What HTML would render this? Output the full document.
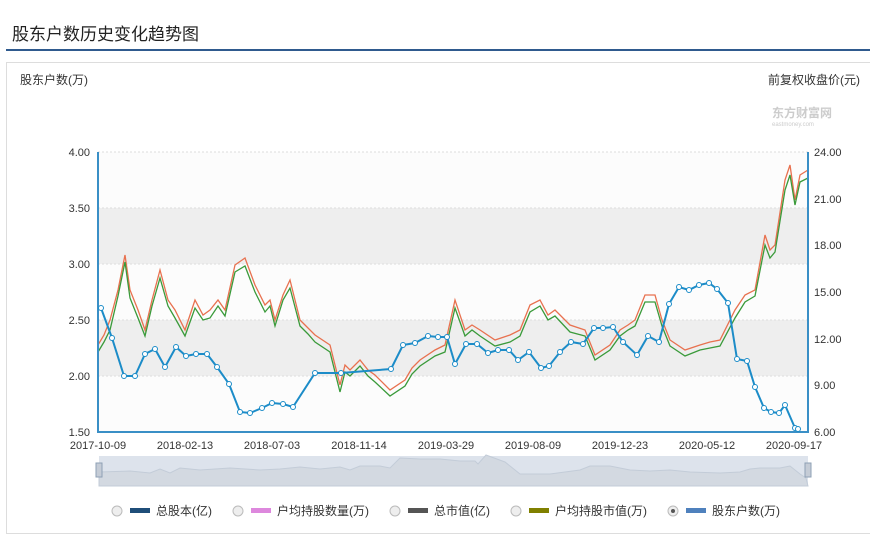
<!DOCTYPE html><html><head><meta charset="utf-8"><style>
body{margin:0;width:870px;height:521px;background:#fff;font-family:"Liberation Sans","Noto Sans CJK SC",sans-serif;overflow:hidden;position:relative}
.t{position:absolute;left:12px;top:20px;font-size:17px;color:#222}
.bar{position:absolute;left:6px;top:49px;width:864px;height:2px;background:#2f5a8e}
.box{position:absolute;left:6px;top:62px;width:864px;height:470px;border:1px solid #ddd;border-right:none}
svg{position:absolute;left:0;top:0}
</style></head><body>
<div class="t">股东户数历史变化趋势图</div><div class="bar"></div><div class="box"></div>
<svg width="870" height="521" font-family="Liberation Sans, Noto Sans CJK SC, sans-serif" font-size="11" fill="#333">
<text x="20" y="84" font-size="12">股东户数(万)</text>
<text x="768" y="84" font-size="12">前复权收盘价(元)</text>
<text x="772" y="117" font-size="12" fill="#ccc" font-weight="bold">东方财富网</text>
<text x="772" y="126" font-size="6" fill="#ccc">eastmoney.com</text>
<rect x="98" y="152" width="710" height="280" fill="#fcfcfc"/>
<rect x="98" y="208" width="710" height="56" fill="#eee"/>
<rect x="98" y="320" width="710" height="56" fill="#eee"/>
<g stroke="#ddd" stroke-dasharray="2,2"><line x1="98" y1="152" x2="808" y2="152"/><line x1="98" y1="208" x2="808" y2="208"/><line x1="98" y1="264" x2="808" y2="264"/><line x1="98" y1="320" x2="808" y2="320"/><line x1="98" y1="376" x2="808" y2="376"/></g>
<g text-anchor="end"><text x="90" y="156">4.00</text><text x="90" y="212">3.50</text><text x="90" y="268">3.00</text><text x="90" y="324">2.50</text><text x="90" y="380">2.00</text><text x="90" y="436">1.50</text></g>
<g><text x="814" y="156">24.00</text><text x="814" y="203">21.00</text><text x="814" y="249">18.00</text><text x="814" y="296">15.00</text><text x="814" y="343">12.00</text><text x="814" y="389">9.00</text><text x="814" y="436">6.00</text></g>
<g text-anchor="middle"><text x="98" y="449">2017-10-09</text><text x="185" y="449">2018-02-13</text><text x="272" y="449">2018-07-03</text><text x="359" y="449">2018-11-14</text><text x="446" y="449">2019-03-29</text><text x="533" y="449">2019-08-09</text><text x="620" y="449">2019-12-23</text><text x="707" y="449">2020-05-12</text><text x="794" y="449">2020-09-17</text></g>
<polyline fill="none" stroke="#e8714f" stroke-width="1.3" points="98,345 104,335 110,320 118,290 125,255 130,290 138,310 145,330 152,300 160,270 168,300 175,310 185,330 195,300 203,315 210,310 218,300 225,310 235,265 245,258 255,285 265,305 270,300 275,320 283,295 290,280 300,320 308,328 315,335 330,345 340,385 345,365 350,370 360,360 368,370 375,375 390,390 405,380 412,368 420,360 435,350 445,345 455,300 465,330 472,325 480,330 495,340 510,335 520,330 530,305 540,300 548,315 555,310 570,325 585,330 595,355 610,345 620,330 628,325 635,320 645,295 655,295 662,320 670,340 685,350 700,345 710,342 720,340 735,310 745,295 755,290 765,235 770,250 775,245 785,180 790,165 795,200 800,175 808,170"/>
<polyline fill="none" stroke="#3a9a3a" stroke-width="1.3" points="98,352 104,342 110,330 118,296 125,262 130,298 138,318 145,336 152,306 160,278 168,306 175,318 185,336 195,308 203,320 210,318 218,306 225,316 235,272 245,266 255,292 265,312 270,306 275,326 283,300 290,288 300,326 308,334 315,342 330,352 340,392 345,372 350,376 360,366 368,376 375,382 390,396 405,386 412,374 420,366 435,356 445,352 455,308 465,336 472,330 480,336 495,346 510,342 520,336 530,312 540,306 548,320 555,316 570,332 585,336 595,360 610,350 620,336 628,330 635,326 645,302 655,302 662,326 670,346 685,356 700,350 710,348 720,346 735,318 745,302 755,296 765,245 770,258 775,252 785,190 790,175 795,205 800,182 808,178"/>
<line x1="98" y1="152" x2="98" y2="432" stroke="#3a8fc6" stroke-width="2"/>
<line x1="808" y1="152" x2="808" y2="432" stroke="#3a8fc6" stroke-width="2"/>
<line x1="97" y1="432" x2="809" y2="432" stroke="#3a8fc6" stroke-width="2"/>
<polyline fill="none" stroke="#1c8cc8" stroke-width="2" points="101,308 112,338 124,376 135,376 145,354 155,349 165,367 176,347 186,356 196,354 207,354 217,367 229,384 240,412 250,413 262,408 272,403 283,404 293,407 315,373 341,373 391,369 403,345 415,343 428,336 438,337 447,337 455,364 466,344 477,344 488,353 498,350 509,350 518,360 529,352 541,368 549,366 560,352 571,342 583,344 594,328 603,328 613,327 623,342 637,355 648,336 659,342 669,304 679,287 689,290 699,285 709,283 717,289 728,303 737,359 747,361 755,387 764,408 771,412 779,413 785,405 795,428 798,429"/>
<g fill="#fff" stroke="#1c8cc8" stroke-width="1">
<circle cx="101" cy="308" r="2.5"/><circle cx="112" cy="338" r="2.5"/><circle cx="124" cy="376" r="2.5"/><circle cx="135" cy="376" r="2.5"/><circle cx="145" cy="354" r="2.5"/><circle cx="155" cy="349" r="2.5"/><circle cx="165" cy="367" r="2.5"/><circle cx="176" cy="347" r="2.5"/><circle cx="186" cy="356" r="2.5"/><circle cx="196" cy="354" r="2.5"/><circle cx="207" cy="354" r="2.5"/><circle cx="217" cy="367" r="2.5"/><circle cx="229" cy="384" r="2.5"/><circle cx="240" cy="412" r="2.5"/><circle cx="250" cy="413" r="2.5"/><circle cx="262" cy="408" r="2.5"/><circle cx="272" cy="403" r="2.5"/><circle cx="283" cy="404" r="2.5"/><circle cx="293" cy="407" r="2.5"/><circle cx="315" cy="373" r="2.5"/><circle cx="341" cy="373" r="2.5"/><circle cx="391" cy="369" r="2.5"/><circle cx="403" cy="345" r="2.5"/><circle cx="415" cy="343" r="2.5"/><circle cx="428" cy="336" r="2.5"/><circle cx="438" cy="337" r="2.5"/><circle cx="447" cy="337" r="2.5"/><circle cx="455" cy="364" r="2.5"/><circle cx="466" cy="344" r="2.5"/><circle cx="477" cy="344" r="2.5"/><circle cx="488" cy="353" r="2.5"/><circle cx="498" cy="350" r="2.5"/><circle cx="509" cy="350" r="2.5"/><circle cx="518" cy="360" r="2.5"/><circle cx="529" cy="352" r="2.5"/><circle cx="541" cy="368" r="2.5"/><circle cx="549" cy="366" r="2.5"/><circle cx="560" cy="352" r="2.5"/><circle cx="571" cy="342" r="2.5"/><circle cx="583" cy="344" r="2.5"/><circle cx="594" cy="328" r="2.5"/><circle cx="603" cy="328" r="2.5"/><circle cx="613" cy="327" r="2.5"/><circle cx="623" cy="342" r="2.5"/><circle cx="637" cy="355" r="2.5"/><circle cx="648" cy="336" r="2.5"/><circle cx="659" cy="342" r="2.5"/><circle cx="669" cy="304" r="2.5"/><circle cx="679" cy="287" r="2.5"/><circle cx="689" cy="290" r="2.5"/><circle cx="699" cy="285" r="2.5"/><circle cx="709" cy="283" r="2.5"/><circle cx="717" cy="289" r="2.5"/><circle cx="728" cy="303" r="2.5"/><circle cx="737" cy="359" r="2.5"/><circle cx="747" cy="361" r="2.5"/><circle cx="755" cy="387" r="2.5"/><circle cx="764" cy="408" r="2.5"/><circle cx="771" cy="412" r="2.5"/><circle cx="779" cy="413" r="2.5"/><circle cx="785" cy="405" r="2.5"/><circle cx="795" cy="428" r="2.5"/><circle cx="798" cy="429" r="2.5"/></g>
<rect x="99" y="456" width="709" height="30" fill="#dde3ec"/>
<path d="M99,472 L130,471 150,473 160,469 170,473 180,468 200,470 230,468 260,470 280,469 300,467 320,469 340,467 350,470 360,466 380,466 390,468 400,458 420,459 440,459 460,461 470,461 475,461 478,464 486,455 505,462 520,474 550,474 580,470 590,466 610,466 630,470 650,471 670,470 690,472 720,473 740,472 750,469 760,468 780,468 790,466 800,474 806,478 808,486 99,486Z" fill="#d3d9e1" stroke="#c3ccd8"/>
<rect x="96" y="463" width="6" height="14" fill="#c5ccd6" stroke="#8ea0b5"/>
<rect x="805" y="463" width="6" height="14" fill="#c5ccd6" stroke="#8ea0b5"/>
<g font-size="12">
<circle cx="117" cy="511" r="5" fill="#eee" stroke="#bbb"/><rect x="130" y="508" width="20" height="5" fill="#1f4e79"/><text x="156" y="515">总股本(亿)</text>
<circle cx="238" cy="511" r="5" fill="#eee" stroke="#bbb"/><rect x="251" y="508" width="20" height="5" fill="#dd88dd"/><text x="277" y="515">户均持股数量(万)</text>
<circle cx="395" cy="511" r="5" fill="#eee" stroke="#bbb"/><rect x="408" y="508" width="20" height="5" fill="#555"/><text x="434" y="515">总市值(亿)</text>
<circle cx="516" cy="511" r="5" fill="#eee" stroke="#bbb"/><rect x="529" y="508" width="20" height="5" fill="#808000"/><text x="555" y="515">户均持股市值(万)</text>
<circle cx="673" cy="511" r="5" fill="#eee" stroke="#bbb"/><circle cx="673" cy="511" r="2" fill="#555"/><rect x="686" y="508" width="20" height="5" fill="#4f81bd"/><text x="712" y="515">股东户数(万)</text>
</g>
</svg></body></html>
